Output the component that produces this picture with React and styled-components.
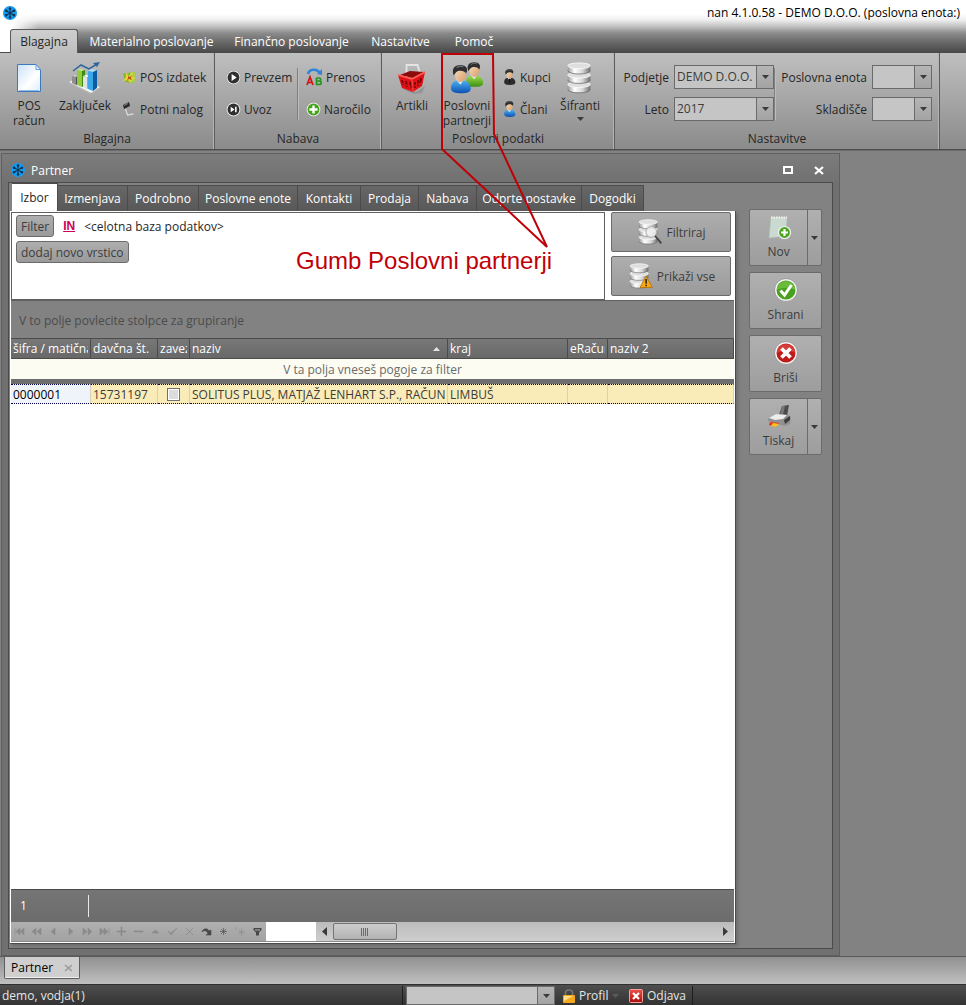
import React from 'react';
import styled, { createGlobalStyle } from 'styled-components';

const colors = {
  ink: '#262626',
  inkSoft: '#3c3c3c',
  frame: '#4b4b4b',
  frameSoft: '#5f5f5f',
  body: '#828282',
  dark: '#6e6e6e',
  red: '#c00008',
};

const GlobalStyle = createGlobalStyle`
  * {
    box-sizing: border-box;
  }

  body {
    margin: 0;
    background: ${colors.body};
  }

  body, button, select, input, table {
    font-family: 'Open Sans', 'Noto Sans', sans-serif;
    font-size: 12px;
    line-height: 15px;
    color: ${colors.ink};
  }

  button {
    border: 0;
    padding: 0;
    background: none;
    white-space: nowrap;
  }

  svg {
    display: block;
    flex: none;
  }
`;

const Page = styled.div`
  position: relative;
  min-height: 100vh;
  display: flex;
  flex-direction: column;
`;

/* Title bar and ribbon tabs */

const Header = styled.header`
  height: 53px;
  display: flex;
  flex-direction: column;
  justify-content: space-between;
  border-bottom: 1px solid ${colors.frame};
  background:
    linear-gradient(to right, #fff 12px, rgba(255, 255, 255, 0) 38px),
    linear-gradient(#fff 14px, #eee 20px, #bdbdbd 27px, #8c8c8c 33px, #666 43px, #4b4b4b 52px);
`;

const TitleRow = styled.div`
  display: flex;
  align-items: center;
  justify-content: space-between;
  height: 25px;
  padding: 0 6px 0 3px;
`;

const AppTitle = styled.h1`
  margin: 0;
  font-size: 12px;
  font-weight: 400;
  color: #000;
`;

const RibbonTabs = styled.nav`
  display: flex;
  padding-left: 10px;
  margin-bottom: -1px;
`;

const RibbonTab = styled.button`
  height: 24px;
  width: ${({ $width }) => $width}px;
  color: ${({ $active }) => ($active ? colors.ink : '#fff')};
  ${({ $active }) => $active && `
    border: 1px solid #5a5a5a;
    border-bottom: 0;
    border-radius: 3px 3px 0 0;
    background: linear-gradient(#cfcfcf, #bebebe);
  `}
`;

/* Ribbon */

const Ribbon = styled.div`
  display: flex;
  height: 97px;
  border-bottom: 1px solid ${colors.frame};
  background: linear-gradient(#bfbfbf, #8b8b8b);
`;

const Group = styled.section`
  display: flex;
  flex-direction: column;
  width: ${({ $width }) => $width}px;
  padding-top: 8px;
  border-right: 1px solid #5c5c5c;
  box-shadow: inset -1px 0 #b4b4b4;
`;

const GroupBody = styled.div`
  display: flex;
  height: 70px;
  padding-left: ${({ $pad }) => $pad}px;
`;

const GroupName = styled.h2`
  margin: 0;
  font-size: 12px;
  font-weight: 400;
  text-align: center;
`;

const BigButton = styled.button`
  display: flex;
  flex-direction: column;
  align-items: center;
  justify-content: flex-start;
  gap: 4px;
  width: ${({ $width }) => $width}px;
  padding-top: 1px;
`;

const SmallColumn = styled.div`
  display: flex;
  flex-direction: column;
  padding-left: ${({ $pad }) => $pad}px;
  width: ${({ $width }) => $width}px;
`;

const SmallButton = styled.button`
  display: flex;
  align-items: center;
  gap: 3px;
  height: 32px;
`;

const Divider = styled.span`
  width: 2px;
  height: 52px;
  margin-top: 7px;
  background: linear-gradient(to right, #808080 1px, #bcbcbc 1px);
`;

const Fields = styled.div`
  display: grid;
  grid-template-columns: ${({ $columns }) => $columns};
  grid-auto-rows: 32px;
  align-items: center;
  column-gap: 5px;

  label {
    text-align: right;
    white-space: nowrap;
  }
`;

const Combo = styled.span`
  position: relative;
  display: flex;
  width: ${({ $width }) => ($width ? `${$width}px` : 'auto')};
  height: ${({ $height }) => $height || 24}px;
  border: 1px solid #6a6a6a;
  background: #c5c5c5;

  select {
    flex: 1;
    min-width: 0;
    appearance: none;
    border: 0;
    padding: 0 18px 2px 2px;
    background: none;
    color: ${colors.inkSoft};
    outline: 0;
  }
`;

const ComboArrow = styled.span`
  position: absolute;
  inset: 0 0 0 auto;
  width: 17px;
  display: grid;
  place-items: center;
  border-left: 1px solid #6a6a6a;
  background: linear-gradient(#b5b5b5, #a3a3a3);
  pointer-events: none;
`;

/* Document window */

const Workspace = styled.main`
  flex: 1;
  display: flex;
  padding: 2px 126px 0 1px;
  border-top: 1px solid #6c6c6c;
  background: ${colors.body};
`;

const Window = styled.section`
  flex: 1;
  min-width: 0;
  display: flex;
  flex-direction: column;
  padding: 0 6px 6px;
  border: 1px solid ${colors.frameSoft};
  background: linear-gradient(#7c7c7c, #707070 30px, #707070);
`;

const WindowTitle = styled.div`
  display: flex;
  align-items: center;
  height: 28px;
  padding: 4px 8px 0 3px;

  h2 {
    flex: 1;
    margin: 0 0 0 6px;
    font-size: 12px;
    font-weight: 400;
    color: #fff;
  }

  button {
    width: 12px;
    height: 12px;
    margin-left: 19px;
    display: grid;
    place-items: center;
  }
`;

const WindowBody = styled.div`
  flex: 1;
  display: flex;
  padding: 0 0 4px 1px;
  border: 1px solid ${colors.frame};
  background: ${colors.body};
`;

const Tabbed = styled.div`
  flex: 1;
  min-width: 0;
  display: flex;
  flex-direction: column;
`;

const PageTabs = styled.div`
  display: flex;
  align-items: flex-end;
  height: 28px;
  padding-left: 2px;
`;

const PageTab = styled.button`
  width: ${({ $width }) => $width}px;
  height: ${({ $active }) => ($active ? 28 : 26)}px;
  border: solid ${colors.frame};
  border-width: 1px 1px 0 0;
  background: ${({ $active }) => ($active ? '#fff' : 'linear-gradient(#676767, #585858)')};
  color: ${({ $active }) => ($active ? colors.ink : '#fff')};
`;

const TabPage = styled.div`
  flex: 1;
  display: flex;
  flex-direction: column;
  padding: 1px;
  border: solid ${colors.frame};
  border-width: 0 1px 1px 0;
  background: #fff;
  box-shadow: 2px 2px 3px #6c6c6c;
`;

const FilterArea = styled.div`
  display: flex;
  height: 88px;
`;

const FilterBox = styled.div`
  flex: 1;
  display: flex;
  flex-direction: column;
  align-items: flex-start;
  gap: 4px;
  padding: 2px 4px;
  border: 1px solid ${colors.frameSoft};
`;

const FilterLine = styled.div`
  display: flex;
  align-items: center;
  gap: 9px;
  white-space: nowrap;

  a {
    font: bold 12px/15px 'Liberation Sans', sans-serif;
    color: #cc0055;
  }
`;

const Pill = styled.button`
  height: 22px;
  padding: 0 4px;
  border: 1px solid #6b6b6b;
  border-radius: 3px;
  background: linear-gradient(#aeaeae, #9a9a9a);
  color: ${colors.inkSoft};
`;

const FilterActions = styled.div`
  display: flex;
  flex-direction: column;
  gap: 4px;
  width: 129px;
  padding: 0 3px 0 6px;
`;

const ActionButton = styled(Pill)`
  display: flex;
  align-items: center;
  justify-content: center;
  gap: 4px;
  height: 40px;
  border-radius: 2px;
`;

const GroupPanel = styled.div`
  height: 38px;
  padding: 12px 8px 0;
  border-top: 1px solid ${colors.frameSoft};
  background: ${colors.body};
  color: ${colors.frame};
`;

const Grid = styled.table`
  width: 100%;
  table-layout: fixed;
  border-collapse: separate;
  border-spacing: 0;

  th, td {
    height: 20px;
    padding: 0 2px;
    overflow: hidden;
    white-space: nowrap;
    text-align: left;
    font-weight: 400;
  }

  th {
    height: 21px;
    border: solid ${colors.frame};
    border-width: 1px 1px 1px 0;
    background: linear-gradient(#787878, #686868);
    color: #fff;
  }

  th svg {
    float: right;
    margin: 6px 5px 0 0;
  }
`;

const CellText = styled.span`
  display: block;
  overflow: hidden;
`;

const FilterRow = styled.tr`
  td {
    height: 25px;
    padding: 0;
    border-bottom: 5px solid ${colors.dark};
    background: #fcfcf3;
    color: #6a6a6a;
    text-align: center;
  }
`;

const DataRow = styled.tr`
  td {
    border-top: 1px dotted #00004c;
    border-bottom: 1px dotted #00004c;
    border-right: 1px solid #d6d0bf;
    background: #faecb9;
    color: ${colors.inkSoft};
  }

  td:first-child {
    background: #eff4fb;
    color: #000;
  }

  input {
    appearance: none;
    display: block;
    width: 13px;
    height: 13px;
    margin: 0 auto;
    border: 1px solid #707070;
    background: #dcdcdc;
    box-shadow: inset 0 0 0 1px #fff;
  }
`;

const GridSpace = styled.div`
  flex: 1;
`;

const GridFooter = styled.div`
  display: flex;
  align-items: center;
  height: 33px;
  border-top: 1px solid ${colors.frame};
  background: linear-gradient(#757575, #6c6c6c);
  color: #fff;

  span {
    width: 78px;
    height: 22px;
    padding: 3px 9px;
    border-right: 1px solid #e8e8e8;
  }
`;

const NavigatorBar = styled.div`
  display: flex;
  height: 20px;
  border-bottom: 1px solid #8a8a8a;
`;

const Navigator = styled.div`
  display: flex;
  width: 255px;
  background: linear-gradient(#b0b0b0, #a2a2a2);

  button {
    width: 17px;
    display: grid;
    place-items: center;
  }
`;

const ScrollBar = styled.div`
  flex: 1;
  display: flex;
  justify-content: space-between;
  margin-left: 50px;
  background: linear-gradient(#bcbcbc, #cecece);

  button {
    width: 17px;
    display: grid;
    place-items: center;
  }
`;

const Thumb = styled.div`
  width: 64px;
  margin: 1px auto 1px 0;
  display: grid;
  place-items: center;
  border: 1px solid #757575;
  border-radius: 2px;
  background: linear-gradient(#cdcdcd, #b2b2b2);
`;

const SideBar = styled.aside`
  display: flex;
  flex-direction: column;
  gap: 6px;
  width: 73px;
  margin: 26px 10px 0 13px;
`;

const SideItem = styled.div`
  display: flex;
  height: 57px;
  border: 1px solid #6b6b6b;
  border-radius: 2px;
  background: linear-gradient(#b0b0b0, #9d9d9d);
`;

const SideButton = styled.button`
  flex: 1;
  display: flex;
  flex-direction: column;
  align-items: center;
  gap: 5px;
  padding-top: 5px;
  color: ${colors.inkSoft};
`;

const SideMore = styled.button`
  width: 14px;
  display: grid;
  place-items: center;
  border-left: 1px solid #6b6b6b;
`;

/* Bottom bars */

const TaskBar = styled.div`
  height: 28px;
  padding: 0 4px;
  border-top: 1px solid #5a5a5a;
  background: linear-gradient(#909090, #c0c0c0);
`;

const TaskTab = styled.div`
  display: flex;
  justify-content: space-between;
  align-items: center;
  width: 76px;
  height: 22px;
  padding: 0 6px;
  border: 1px solid #5e5e5e;
  border-top: 0;
  border-radius: 0 0 2px 2px;
  background: #cfcfcf;
  box-shadow: inset 0 -1px #f0f0f0;
  color: #000;
`;

const StatusBar = styled.footer`
  display: flex;
  align-items: center;
  height: 21px;
  padding-top: 1px;
  border-top: 1px solid #303030;
  background: linear-gradient(#4e4e4e, #333);
  color: #e6e6e6;
`;

const StatusUser = styled.span`
  width: 402px;
  padding-left: 2px;
`;

const StatusTools = styled.div`
  display: flex;
  align-items: center;
  height: 19px;
  width: 291px;
  padding-left: 3px;
  border: solid #1e1e1e;
  border-width: 0 1px;
`;

const StatusButton = styled.button`
  display: flex;
  align-items: center;
  gap: 4px;
  width: ${({ $width }) => $width}px;
  padding-left: 8px;
  color: #e6e6e6;
`;

/* Callout drawn over the application */

const Callout = styled.svg`
  position: absolute;
  left: 440px;
  top: 52px;
  pointer-events: none;
`;

const CalloutText = styled.p`
  position: absolute;
  left: 296px;
  top: 246px;
  margin: 0;
  font: 24px/30px 'Liberation Sans', Arial, sans-serif;
  color: ${colors.red};
  white-space: nowrap;
  pointer-events: none;
`;

/* Icons */

const IconDefs = styled.svg`
  position: absolute;
`;

const Gradients = () => (
  <IconDefs width="0" height="0" aria-hidden="true">
    <defs>
      <linearGradient id="metal">
        <stop offset="0" stopColor="#9a9a9a" />
        <stop offset=".3" stopColor="#fff" />
        <stop offset=".65" stopColor="#d8d8d8" />
        <stop offset="1" stopColor="#6f6f6f" />
      </linearGradient>
      <linearGradient id="paper" x2="1" y2="1">
        <stop offset="0" stopColor="#c9e2fb" />
        <stop offset=".6" stopColor="#fff" />
        <stop offset="1" stopColor="#dcecfc" />
      </linearGradient>
      <linearGradient id="blue" x2="0" y2="1">
        <stop offset="0" stopColor="#4eb4f5" />
        <stop offset="1" stopColor="#0b4fb0" />
      </linearGradient>
      <linearGradient id="green" x2="0" y2="1">
        <stop offset="0" stopColor="#a2de4c" />
        <stop offset="1" stopColor="#3c8f14" />
      </linearGradient>
      <linearGradient id="red" x2="0" y2="1">
        <stop offset="0" stopColor="#f0524a" />
        <stop offset="1" stopColor="#a80c0c" />
      </linearGradient>
      <linearGradient id="skin" x2="1" y2="1">
        <stop offset="0" stopColor="#fbe0c0" />
        <stop offset="1" stopColor="#d69c68" />
      </linearGradient>
    </defs>
  </IconDefs>
);

const AppIcon = () => (
  <svg width="14" height="14" viewBox="0 0 28 28">
    <circle cx="14" cy="14" r="14" fill="#129cf4" />
    {[0, 60, 120, 180, 240, 300].map((angle) => (
      <g key={angle} transform={`rotate(${angle} 14 14)`}>
        <path d="M14 11V5" stroke="#15324c" strokeWidth="2.600" />
        <circle cx="14" cy="5" r="2.600" fill="#15324c" />
      </g>
    ))}
    <circle cx="14" cy="14" r="3" fill="#15324c" />
  </svg>
);

const Arrow = ({ fill = '#3a3a3a', up }) => (
  <svg width="7" height="4" viewBox="0 0 7 4">
    <path d={up ? 'M0 4L3.5 0L7 4z' : 'M0 0h7L3.5 4z'} fill={fill} />
  </svg>
);

const PageIcon = () => (
  <svg width="32" height="32" viewBox="0 0 32 32">
    <path d="M4.500 2.500h18.500l4.500 5v22h-23z" fill="url(#paper)" stroke="#3f79bd" />
    <path d="M23 2.500v5h4.500z" fill="#e4f0fc" stroke="#6b9fd8" />
    <path d="M6 28.500h20" stroke="#8fbcec" />
  </svg>
);

const ChartIcon = () => (
  <svg width="34" height="32" viewBox="0 0 34 32">
    <path d="M1 20l7-3 24 8-9 6z" fill="#f6f6f6" stroke="#d0d0d0" strokeWidth=".5" />
    <path d="M1 20l22 11v1L1 21z" fill="#bdbdbd" />
    <path d="M4 14l2-1 4 1-2 1z" fill="#c8c8c8" />
    <path d="M4 14l4 1v8l-4-2z" fill="#8e8e8e" />
    <path d="M8 15l2-1v8l-2 1z" fill="#4f4f4f" />
    <path d="M9 8l3-1 5 1-3 1z" fill="#c8ee8a" />
    <path d="M9 8l5 1v16l-5-2z" fill="#8fce3a" />
    <path d="M14 9l3-1v16l-3 1z" fill="#3f8a14" />
    <path d="M15 14l3-1 4 1-2 1z" fill="#fff" />
    <path d="M15 14l4 1v12l-4-2z" fill="#e2e2e2" />
    <path d="M19 15l2-1v12l-2 1z" fill="#a4a4a4" />
    <path d="M20 9l3-2 6 1-3 2z" fill="#a8def8" />
    <path d="M20 9l5 1v19l-5-2z" fill="#38a8ea" />
    <path d="M25 10l4-2v18l-4 3z" fill="#0b5c9e" />
    <path d="M5 9l8-6 8 4 8-5" fill="none" stroke="#2f659c" strokeWidth="1.500" />
    <path d="M25 1l7-1-3 5z" fill="#2f659c" />
  </svg>
);

const BasketIcon = () => (
  <svg width="32" height="32" viewBox="0 0 32 32">
    <path d="M6 27l14 3 9-6-3 7-8 1z" fill="#808080" fillOpacity=".5" />
    <path d="M10.500 15V3h11l3 10" fill="none" stroke="#e4e4e4" strokeWidth="1.800" />
    <path d="M4 13l10-4 14 1-11 6z" fill="#8c0c0c" />
    <path d="M2 13l14 3 13-6-3 14-9 6-11-4z" fill="#e01218" />
    <path d="M6 18l1 5M10 19l1 6M14 20l1 6M19 20v6M22 18v6M25 16l-1 6" stroke="#7a0505" strokeWidth="1.800" />
    <path d="M2 13l14 4 13-7" fill="none" stroke="#ff5a54" strokeWidth="1.800" />
    <path d="M16 17l1 13" stroke="#f03a36" strokeWidth="1.500" />
    <path d="M5 21l11 4 11-5" fill="none" stroke="#e01218" strokeWidth="1.200" />
  </svg>
);

const Person = ({ body, suit }) => (
  <>
    <path d="M0 24c0-7 4-8 8-9h4c5 1 9 4 9 9 0 4-4 5-10 5S0 28 0 24z" fill={body} />
    <path d="M5 14l5 6 4-6z" fill={suit ? '#fff' : '#dcecf8'} />
    {suit && <path d="M9 17h2l1 8h-3z" fill="#151515" />}
    <path d="M4 6c0 7 2 11 6 11s6-4 6-10c0-4-2-6-6-6s-6 2-6 5z" fill="url(#skin)" />
    <path d="M3 10C0 3 4-1 10-1c6 0 9 4 6 9-1-2-3-3-6-3-4 0-5 2-7 5z" fill="#2d2f31" />
    <path d="M6 2c2-2 5-2 7-1" fill="none" stroke="#757779" strokeWidth="1.200" />
  </>
);

const PartnersIcon = () => (
  <svg width="32" height="32" viewBox="0 0 32 32">
    <g transform="translate(15 1) scale(.82)"><Person body="url(#green)" /></g>
    <g transform="translate(0 4) scale(.94)"><Person body="url(#blue)" /></g>
  </svg>
);

const PersonIcon = ({ body, suit }) => (
  <svg width="15" height="16" viewBox="-4 -1 28 30">
    <Person body={body} suit={suit} />
  </svg>
);

const Discs = () => (
  <>
    {[22, 12, 2].map((y) => (
      <g key={y}>
        <path d={`M4 ${y + 2}v5c0 5 24 5 24 0v-5z`} fill="url(#metal)" />
        <path d={`M4 ${y + 7}c0 5 24 5 24 0`} fill="none" stroke="#6a6a6a" strokeWidth=".8" />
        <ellipse cx="16" cy={y + 2} rx="12" ry="3" fill="#dedede" stroke="#f8f8f8" />
      </g>
    ))}
  </>
);

const DatabaseIcon = ({ size = 32, kind }) => (
  <svg width={size} height={size} viewBox="0 0 34 34">
    <Discs />
    {kind === 'search' && (
      <>
        <circle cx="20" cy="17" r="7" fill="#eef1f1" fillOpacity=".85" stroke="#b4b4b4" strokeWidth="1.500" />
        <path d="M25 22l8 10" stroke="#444" strokeWidth="2.500" />
      </>
    )}
    {kind === 'warning' && (
      <>
        <path d="M25 17l8 15H17z" fill="#f9a90e" stroke="#b46a00" strokeLinejoin="round" />
        <path d="M25 21v6M25 28.500v2" stroke="#222" strokeWidth="2" />
      </>
    )}
  </svg>
);

const ReceiptIcon = () => (
  <svg width="15" height="16" viewBox="0 0 15 16">
    <path d="M1 4l4 1 3-2 6 0-1 10-5 1-5-1z" fill="#7fbd2c" />
    <path d="M8 3l6 0-1 10-5 1z" fill="#a3d34c" />
    <path d="M4 4l3 3 4-4-1 5 4 1-4 2-2 3-2-3-5 1 3-4z" fill="#f0cf3c" />
    <path d="M6 7l2 1 2-2-1 3 1 2-3-1-2 1 1-2z" fill="#b65a16" />
  </svg>
);

const TravelIcon = () => (
  <svg width="15" height="16" viewBox="0 0 15 16">
    <path d="M1 4l6-3 1 4-6 3z" fill="#2a2a2a" />
    <path d="M2 4l4-2v1l-4 2z" fill="#8a8a8a" />
    <path d="M3.500 8l2 6 6-1" fill="none" stroke="#d8d8d8" strokeWidth="1.300" />
  </svg>
);

const RoundIcon = ({ fill, children, size = 15 }) => (
  <svg width={size} height={size} viewBox="0 0 24 24">
    <circle cx="12" cy="12" r="11.500" fill="#f3f3f3" stroke="#8b8b8b" strokeWidth=".8" />
    <circle cx="12" cy="12" r="9.500" fill={fill} />
    {children}
  </svg>
);

const PlayIcon = () => (
  <RoundIcon fill="#303030"><path d="M9 6.500v11l8-5.500z" fill="#fff" /></RoundIcon>
);

const NextIcon = () => (
  <RoundIcon fill="#303030"><path d="M7.500 7.500v9l6-4.500zM14.500 7.500h2.500v9h-2.500z" fill="#fff" /></RoundIcon>
);

const PlusIcon = () => (
  <RoundIcon fill="#46a41c"><path d="M12 5.500v13M5.500 12h13" stroke="#fff" strokeWidth="3.800" /></RoundIcon>
);

const CheckIcon = () => (
  <RoundIcon size={24} fill="#48a01e">
    <path d="M3 12a9 9 0 0118 0c-5-3-12-3-18 0z" fill="#86cc4e" fillOpacity=".6" />
    <path d="M6.500 12.500l4 4.500 7-10" fill="none" stroke="#fff" strokeWidth="3" />
  </RoundIcon>
);

const CrossIcon = () => (
  <RoundIcon size={24} fill="#c01a18">
    <path d="M3 12a9 9 0 0118 0c-5-3-12-3-18 0z" fill="#e86058" fillOpacity=".5" />
    <path d="M7.500 7.500l9 9M16.500 7.500l-9 9" stroke="#fff" strokeWidth="3.800" />
  </RoundIcon>
);

const TransferIcon = () => (
  <svg width="17" height="18" viewBox="0 0 17 18">
    <path d="M2 6c1-5 9-6 12-1" fill="none" stroke="#3184d8" strokeWidth="2.500" />
    <path d="M11 6l5 1V1z" fill="#3184d8" />
    <path d="M1 17l3-8 3 8M2.500 14.500h3" fill="none" stroke="#d41414" strokeWidth="1.700" />
    <path d="M10.500 10v6.500h2.500c3 0 3-3.500 0-3.500h-2.500M13 13c2.500 0 2-3 0-3h-2.500" fill="none" stroke="#24951c" strokeWidth="1.700" />
  </svg>
);

const NewIcon = () => (
  <svg width="24" height="24" viewBox="0 0 24 24">
    <path d="M4 2h16l-1 19-17 2z" fill="#cbdad1" stroke="#aebdb4" strokeWidth=".6" />
    <path d="M4 2.500h16" stroke="#f2f2f2" strokeWidth="2" strokeDasharray="1.500 1" />
    <circle cx="17.500" cy="17.500" r="6" fill="#4ba31f" stroke="#f2f2f2" strokeWidth="1.200" />
    <path d="M17.500 14v7M14 17.500h7" stroke="#fff" strokeWidth="2.200" />
  </svg>
);

const PrinterIcon = () => (
  <svg width="24" height="24" viewBox="0 0 24 24">
    <path d="M15 2l7-1-2 11-8-1z" fill="#4c4c4c" />
    <path d="M15 2l3 0-2 9-3 0z" fill="#787878" />
    <path d="M1 15l8-5 12 1 3 2-1 7-5 2-8-2-9-3z" fill="#909090" />
    <path d="M2 14l7-4 11 1-4 4-8 1z" fill="#ececec" />
    <path d="M17 16l6-4v4l-5 4z" fill="#3c3c3c" />
    <path d="M3 18l9 1-3 4-7-2z" fill="#e8371e" />
    <path d="M6 19l6 1-3 3-5-1z" fill="#f7c51f" />
  </svg>
);

const LockIcon = () => (
  <svg width="12" height="14" viewBox="0 0 12 14">
    <path d="M2.500 7V4c0-4 7-4 7 0v3" fill="none" stroke="#777" strokeWidth="1.600" />
    <rect x="0" y="6" width="12" height="8" rx="1" fill="#f5a81c" />
    <path d="M1 12l9-5h-9z" fill="#ffe08a" />
  </svg>
);

const LogoutIcon = () => (
  <svg width="14" height="14" viewBox="0 0 14 14">
    <rect x=".5" y=".5" width="13" height="13" rx="1" fill="url(#red)" stroke="#f4a39c" />
    <path d="M4 4l6 6M10 4l-6 6" stroke="#fff" strokeWidth="2.200" />
  </svg>
);

const navGlyphs = [
  ['Prvi', 'M1 2v7M6 2v7L2 5.500zM10 2v7L6 5.500z'],
  ['Prejšnja stran', 'M5 2v7L1 5.500zM10 2v7L6 5.500z'],
  ['Prejšnji', 'M7 2v7L3 5.500z'],
  ['Naslednji', 'M4 2v7L8 5.500z'],
  ['Naslednja stran', 'M1 2v7L5 5.500zM6 2v7L10 5.500z'],
  ['Zadnji', 'M1 2v7L5 5.500zM5 2v7L9 5.500zM10 2v7'],
  ['Dodaj', 'M1 5h9v1h-9zM5 1h1v9h-1z'],
  ['Odstrani', 'M1 5h9v1h-9z'],
  ['Uredi', 'M2 7h7L5.500 4z'],
  ['Potrdi', 'M1 5l3 4 6-7-6 5z'],
  ['Prekliči', 'M2 2l7 7-3.500-3.500zM9 2l-7 7 3.500-3.500z'],
  ['Osveži', 'M1 6c1-4 6-4 7-1l2-1v5h-5l2-1c-1-4-4-4-6-2z', true],
  ['Zaznamek', 'M5.500 2v7M2 5.500h7M3 3l5 5M8 3l-5 5', true],
  ['Na zaznamek', 'M1 1v3M6.500 2v8M3 6h7M4 3.500l5 5M9 3.500l-5 5'],
];

const ribbonTabs = [
  ['Blagajna', 68],
  ['Materialno poslovanje', 147],
  ['Finančno poslovanje', 133],
  ['Nastavitve', 85],
  ['Pomoč', 62],
];

const pageTabs = [
  ['Izbor', 46],
  ['Izmenjava', 70],
  ['Podrobno', 71],
  ['Poslovne enote', 99],
  ['Kontakti', 63],
  ['Prodaja', 58],
  ['Nabava', 58],
  ['Odprte postavke', 105],
  ['Dogodki', 62],
];

const columns = [
  ['šifra / matična', 80],
  ['davčna št.', 67],
  ['zavez', 32],
  ['naziv', 258],
  ['kraj', 120],
  ['eRačun', 40],
  ['naziv 2'],
];

const sideActions = [
  { label: 'Nov', icon: <NewIcon />, more: true },
  { label: 'Shrani', icon: <CheckIcon /> },
  { label: 'Briši', icon: <CrossIcon /> },
  { label: 'Tiskaj', icon: <PrinterIcon />, more: true },
];

const ComboField = ({ id, label, value = '' }) => (
  <>
    <label htmlFor={id}>{label}</label>
    <Combo>
      <select id={id} defaultValue={value}>
        <option>{value}</option>
      </select>
      <ComboArrow><Arrow /></ComboArrow>
    </Combo>
  </>
);

const RibbonBar = () => (
  <Ribbon>
    <Group $width={215}>
      <GroupBody $pad={3}>
        <BigButton $width={52}><PageIcon /><span>POS<br />račun</span></BigButton>
        <BigButton $width={60}><ChartIcon /><span>Zaključek</span></BigButton>
        <SmallColumn $pad={7} $width={97}>
          <SmallButton><ReceiptIcon />POS izdatek</SmallButton>
          <SmallButton><TravelIcon />Potni nalog</SmallButton>
        </SmallColumn>
      </GroupBody>
      <GroupName>Blagajna</GroupName>
    </Group>

    <Group $width={167}>
      <GroupBody $pad={4}>
        <SmallColumn $pad={7} $width={78}>
          <SmallButton><PlayIcon />Prevzem</SmallButton>
          <SmallButton><NextIcon />Uvoz</SmallButton>
        </SmallColumn>
        <Divider />
        <SmallColumn $pad={7} $width={76}>
          <SmallButton><TransferIcon />Prenos</SmallButton>
          <SmallButton><PlusIcon />Naročilo</SmallButton>
        </SmallColumn>
      </GroupBody>
      <GroupName>Nabava</GroupName>
    </Group>

    <Group $width={233}>
      <GroupBody $pad={3}>
        <BigButton $width={54}><BasketIcon /><span>Artikli</span></BigButton>
        <BigButton $width={56}><PartnersIcon /><span>Poslovni<br />partnerji</span></BigButton>
        <SmallColumn $pad={7} $width={58}>
          <SmallButton><PersonIcon body="#2c2c2c" suit />Kupci</SmallButton>
          <SmallButton><PersonIcon body="url(#blue)" />Člani</SmallButton>
        </SmallColumn>
        <BigButton $width={54}><DatabaseIcon /><span>Šifranti</span><Arrow /></BigButton>
      </GroupBody>
      <GroupName>Poslovni podatki</GroupName>
    </Group>

    <Group $width={325}>
      <GroupBody $pad={7}>
        <Fields $columns="47px 100px">
          <ComboField id="podjetje" label="Podjetje" value="DEMO D.O.O." />
          <ComboField id="leto" label="Leto" value="2017" />
        </Fields>
        <Divider />
        <Fields $columns="91px 60px">
          <ComboField id="enota" label="Poslovna enota" />
          <ComboField id="skladisce" label="Skladišče" />
        </Fields>
      </GroupBody>
      <GroupName>Nastavitve</GroupName>
    </Group>
  </Ribbon>
);

const PartnerGrid = () => (
  <Grid>
    <colgroup>
      {columns.map(([name, width]) => <col key={name} width={width} />)}
    </colgroup>
    <thead>
      <tr>
        {columns.map(([name]) => (
          <th key={name} scope="col">
            {name === 'naziv' && <Arrow up fill="#e4e4e4" />}
            <CellText>{name}</CellText>
          </th>
        ))}
      </tr>
    </thead>
    <tbody>
      <FilterRow>
        <td colSpan={columns.length}>V ta polja vneseš pogoje za filter</td>
      </FilterRow>
      <DataRow>
        <td>0000001</td>
        <td>15731197</td>
        <td><input type="checkbox" aria-label="zavezanec" /></td>
        <td><CellText>SOLITUS PLUS, MATJAŽ LENHART S.P., RAČUNA</CellText></td>
        <td>LIMBUŠ</td>
        <td />
        <td />
      </DataRow>
    </tbody>
  </Grid>
);

const App = () => (
  <Page>
    <GlobalStyle />
    <Gradients />

    <Header>
      <TitleRow>
        <AppIcon />
        <AppTitle>nan 4.1.0.58 - DEMO D.O.O. (poslovna enota:)</AppTitle>
      </TitleRow>
      <RibbonTabs>
        {ribbonTabs.map(([name, width], i) => (
          <RibbonTab key={name} $width={width} $active={i === 0}>{name}</RibbonTab>
        ))}
      </RibbonTabs>
    </Header>

    <RibbonBar />

    <Workspace>
      <Window>
        <WindowTitle>
          <AppIcon />
          <h2>Partner</h2>
          <button aria-label="Povečaj">
            <svg width="10" height="8"><rect x="1" y="1" width="8" height="6" fill="none" stroke="#fff" strokeWidth="2" /></svg>
          </button>
          <button aria-label="Zapri">
            <svg width="10" height="9"><path d="M1 1l8 7M9 1l-8 7" stroke="#fff" strokeWidth="2.200" /></svg>
          </button>
        </WindowTitle>

        <WindowBody>
          <Tabbed>
            <PageTabs>
              {pageTabs.map(([name, width], i) => (
                <PageTab key={name} $width={width} $active={i === 0}>{name}</PageTab>
              ))}
            </PageTabs>
            <TabPage>
              <FilterArea>
                <FilterBox>
                  <FilterLine>
                    <Pill>Filter</Pill>
                    <a href="#in">IN</a>
                    <span>&lt;celotna baza podatkov&gt;</span>
                  </FilterLine>
                  <Pill>dodaj novo vrstico</Pill>
                </FilterBox>
                <FilterActions>
                  <ActionButton><DatabaseIcon size={26} kind="search" />Filtriraj</ActionButton>
                  <ActionButton><DatabaseIcon size={26} kind="warning" />Prikaži vse</ActionButton>
                </FilterActions>
              </FilterArea>
              <GroupPanel>V to polje povlecite stolpce za grupiranje</GroupPanel>
              <PartnerGrid />
              <GridSpace />
              <GridFooter><span>1</span></GridFooter>
              <NavigatorBar>
                <Navigator>
                  {navGlyphs.map(([name, d, enabled]) => (
                    <button key={name} aria-label={name}>
                      <svg width="11" height="11">
                        <path d={d} fill={enabled ? '#484848' : '#8b8b8b'} stroke={enabled ? '#484848' : '#8b8b8b'} strokeWidth=".6" />
                      </svg>
                    </button>
                  ))}
                  <button aria-label="Filter">
                    <svg width="11" height="11">
                      <path d="M1.500 2h8v2L7 6.500v3H4v-3L1.500 4z" fill="#484848" />
                      <path d="M3 4h5" stroke="#b4b4b4" />
                    </svg>
                  </button>
                </Navigator>
                <ScrollBar>
                  <button aria-label="Levo"><svg width="5" height="9"><path d="M5 0v9L0 4.500z" fill="#3a3a3a" /></svg></button>
                  <Thumb><svg width="8" height="8"><path d="M.5 0v8M2.500 0v8M4.500 0v8M6.500 0v8" stroke="#6a6a6a" /></svg></Thumb>
                  <button aria-label="Desno"><svg width="5" height="9"><path d="M0 0v9l5-4.500z" fill="#3a3a3a" /></svg></button>
                </ScrollBar>
              </NavigatorBar>
            </TabPage>
          </Tabbed>

          <SideBar>
            {sideActions.map(({ label, icon, more }) => (
              <SideItem key={label}>
                <SideButton>{icon}{label}</SideButton>
                {more && <SideMore aria-label={`${label} - več`}><Arrow /></SideMore>}
              </SideItem>
            ))}
          </SideBar>
        </WindowBody>
      </Window>
    </Workspace>

    <TaskBar>
      <TaskTab>
        Partner
        <button aria-label="Zapri Partner">
          <svg width="9" height="8"><path d="M1 1l7 6M8 1l-7 6" stroke="#9a9a9a" strokeWidth="1.600" /></svg>
        </button>
      </TaskTab>
    </TaskBar>

    <StatusBar>
      <StatusUser>demo, vodja(1)</StatusUser>
      <StatusTools>
        <Combo $width={149} $height={19}>
          <select aria-label="Iskanje" />
          <ComboArrow><Arrow /></ComboArrow>
        </Combo>
        <StatusButton $width={66}><LockIcon />Profil<Arrow fill="#5a5a5a" /></StatusButton>
        <StatusButton $width={66}><LogoutIcon />Odjava</StatusButton>
      </StatusTools>
    </StatusBar>

    <Callout width="110" height="200" viewBox="440 52 110 200">
      <path d="M442 54H493L494 134L547 247L442 149Z" fill="none" stroke={colors.red} strokeWidth="2" />
    </Callout>
    <CalloutText>Gumb Poslovni partnerji</CalloutText>
  </Page>
);

export default App;
